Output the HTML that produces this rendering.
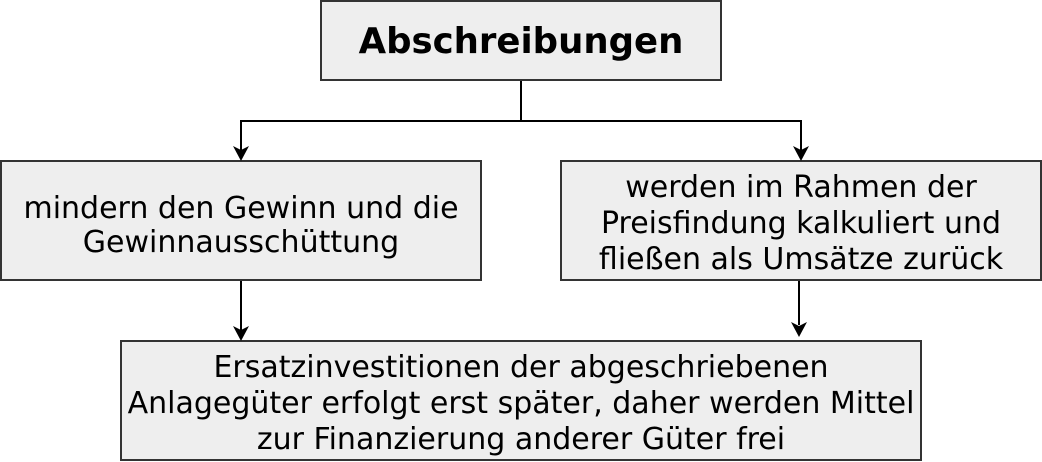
<!DOCTYPE html>
<html><head><meta charset="utf-8"><style>
html,body{margin:0;padding:0;background:#fff;}
svg{display:block;}
text{font-family:"DejaVu Sans","Liberation Sans",sans-serif;font-size:30px;fill:#000;}
</style></head><body>
<svg width="1042" height="462" viewBox="0 0 1042 462" xmlns="http://www.w3.org/2000/svg">
<g fill="#eeeeee" stroke="#333" stroke-width="2">
<rect x="321" y="1" width="400" height="79"/>
<rect x="1" y="161" width="480" height="119"/>
<rect x="561" y="161" width="480" height="119"/>
<rect x="121" y="341" width="800" height="119"/>
</g>
<g stroke="#000" stroke-width="2" fill="none">
<path d="M521 81V121H241V150M521 121H801V150"/>
<path d="M241 281V330"/>
<path d="M799 281V325"/>
</g>
<g fill="#000">
<path d="M233 146L241 161L249 146L241 150Z"/>
<path d="M793 146L801 161L809 146L801 150Z"/>
<path d="M233 326L241 341L249 326L241 330Z"/>
<path d="M791 322L799 337L807 322L799 326Z"/>
</g>
<text x="521" y="53" text-anchor="middle" style="font-weight:bold;font-size:35.5px">Abschreibungen</text>
<text x="241" y="218" text-anchor="middle">mindern den Gewinn und die</text>
<text x="241" y="252" text-anchor="middle">Gewinnausschüttung</text>
<text x="801" y="197" text-anchor="middle">werden im Rahmen der</text>
<text x="801" y="233" text-anchor="middle">Preisfindung kalkuliert und</text>
<text x="801" y="269" text-anchor="middle">fließen als Umsätze zurück</text>
<text x="521" y="377" text-anchor="middle">Ersatzinvestitionen der abgeschriebenen</text>
<text x="521" y="413" text-anchor="middle">Anlagegüter erfolgt erst später, daher werden Mittel</text>
<text x="521" y="449" text-anchor="middle">zur Finanzierung anderer Güter frei</text>
</svg>
</body></html>
